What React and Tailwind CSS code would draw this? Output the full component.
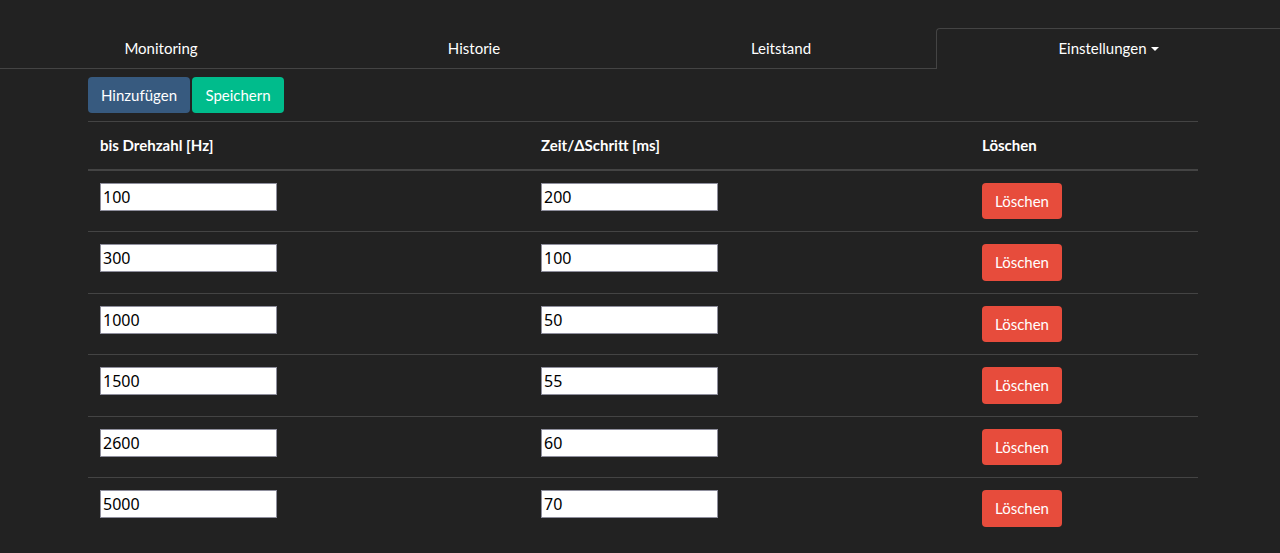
import React from "react";

const rows = [
  ["100", "200"],
  ["300", "100"],
  ["1000", "50"],
  ["1500", "55"],
  ["2600", "60"],
  ["5000", "70"],
];

export default function App() {
  const font = { fontFamily: "Lato, 'Noto Sans', sans-serif" };
  const inputFont = { fontFamily: "'Noto Sans', 'Open Sans', sans-serif" };
  return (
    <div className="min-h-[553px] w-full bg-[#222222] text-white text-[15px] leading-[22.5px]" style={font}>
      <div className="pt-[28px]">
        <nav className="flex border-b border-[#444444]">
          <a className="w-[322px] h-[40px] flex items-center justify-center text-white">Monitoring</a>
          <a className="w-[304px] h-[40px] flex items-center justify-center text-white">Historie</a>
          <a className="w-[310px] h-[40px] flex items-center justify-center text-white">Leitstand</a>
          <a className="flex-1 h-[41px] -mb-px flex items-center justify-center pb-px text-white bg-[#222222] border-t border-l border-[#444444] rounded-tl-[4px]">
            Einstellungen
            <span className="ml-[4px] inline-block w-0 h-0 border-t-[4px] border-t-white border-x-[4px] border-x-transparent"></span>
          </a>
        </nav>
      </div>
      <div className="ml-[88px] w-[1110px]">
        <div className="flex gap-[2px] mt-[8px]">
          <button className="h-[36px] px-3 rounded-[4px] bg-[#375a7f] text-white w-[102px]">Hinzufügen</button>
          <button className="h-[36px] px-3 rounded-[4px] bg-[#00bc8c] text-white w-[92px]">Speichern</button>
        </div>
        <table className="mt-[8px] w-full border-collapse">
          <thead>
            <tr className="border-t border-[#444444] border-b-2">
              <th className="text-left font-bold px-3 h-[48px] w-[441px]">bis Drehzahl [Hz]</th>
              <th className="text-left font-bold px-3 w-[441px]">Zeit/ΔSchritt [ms]</th>
              <th className="text-left font-bold px-3">Löschen</th>
            </tr>
          </thead>
          <tbody>
            {rows.map(([a, b], i) => (
              <tr key={i} className={i < rows.length - 1 ? "border-b border-[#444444]" : ""}>
                <td className="p-3 align-top">
                  <input
                    defaultValue={a}
                    className="w-[177px] h-[28px] bg-white text-black border border-[#8f8f9d] px-[2px] text-[16px]"
                    style={inputFont}
                  />
                </td>
                <td className="p-3 align-top">
                  <input
                    defaultValue={b}
                    className="w-[177px] h-[28px] bg-white text-black border border-[#8f8f9d] px-[2px] text-[16px]"
                    style={inputFont}
                  />
                </td>
                <td className="p-3 align-top">
                  <button className="h-[36.5px] w-[80px] rounded-[4px] bg-[#e74c3c] text-white align-top">Löschen</button>
                </td>
              </tr>
            ))}
          </tbody>
        </table>
      </div>
    </div>
  );
}
